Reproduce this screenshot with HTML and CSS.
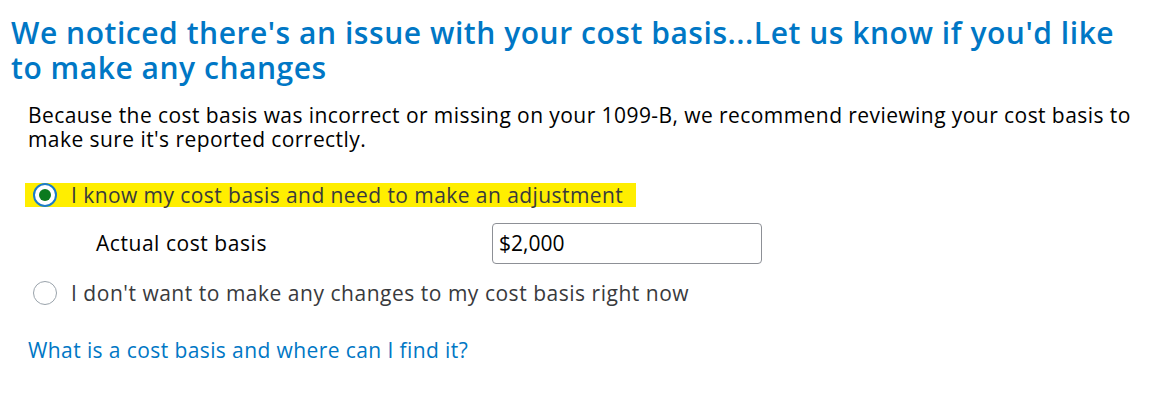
FILE: index.html
```html
<!DOCTYPE html>
<html>
<head>
<meta charset="utf-8">
<link rel="stylesheet" href="styles.css">
</head>
<body>
<div class="page">
  <h1 class="title">We noticed there's an issue with your cost basis...Let us know if you'd like to make any changes</h1>
  <p class="intro">Because the cost basis was incorrect or missing on your 1099-B, we recommend reviewing your cost basis to make sure it's reported correctly.</p>
  <div class="options">
    <label class="option option-selected">
      <span class="radio radio-on"><span class="dot"></span></span>
      <span class="opt-text">I know my cost basis and need to make an adjustment</span>
    </label>
    <div class="field">
      <span class="field-label">Actual cost basis</span>
      <div class="input">$2,000</div>
    </div>
    <label class="option option-last">
      <span class="radio"></span>
      <span class="opt-text">I don't want to make any changes to my cost basis right now</span>
    </label>
  </div>
  <a class="help" href="#">What is a cost basis and where can I find it?</a>
</div>
</body>
</html>
```
FILE: styles.css
```css
html, body { margin: 0; padding: 0; background: #fff; }
body { font-family: "Open Sans", "Lato", sans-serif; }
.page { padding: 15px 0 0 11px; }
.title {
  margin: 0;
  font-size: 30px;
  line-height: 35px;
  font-weight: 600;
  letter-spacing: 0.54px;
  color: #0077c5;
  width: 1120px;
}
.intro {
  margin: 18px 0 0 17px;
  font-size: 21px;
  line-height: 24px;
  letter-spacing: 0.43px;
  color: #000;
  width: 1125px;
}
.options { margin: 32px 0 0 14px; display: flex; flex-direction: column; }
.option { display: flex; align-items: center; gap: 14px; font-size: 21px; line-height: 24px; letter-spacing: 0.43px; color: #393a3d; }
.option-selected { background: #ffee00; width: 611px; height: 24px; }
.option-last { margin-top: 17px; letter-spacing: 0.52px; }
.radio {
  box-sizing: border-box;
  flex: none;
  width: 24px; height: 24px; border-radius: 50%;
  border: 1px solid #9aa3ab;
  background: #fff;
  display: flex; align-items: center; justify-content: center;
  margin-left: 8px;
}
.radio-on { border: 2px solid #1a7cc9; }
.dot { width: 12px; height: 12px; border-radius: 50%; background: #0a7a1e; }
.field { display: flex; align-items: center; margin: 15px 0 0 71px; height: 42px; }
.field-label { font-size: 21px; letter-spacing: 0.55px; color: #000; width: 396px; }
.input {
  box-sizing: border-box;
  width: 270px; height: 41px;
  border: 1px solid #8d9096; border-radius: 4px;
  font-size: 21px; line-height: 39px; padding-left: 6px; color: #000;
}
.help { display: inline-block; margin: 33px 0 0 17px; font-size: 21px; line-height: 24px; letter-spacing: 0.4px; color: #0077c5; text-decoration: none; }
```
